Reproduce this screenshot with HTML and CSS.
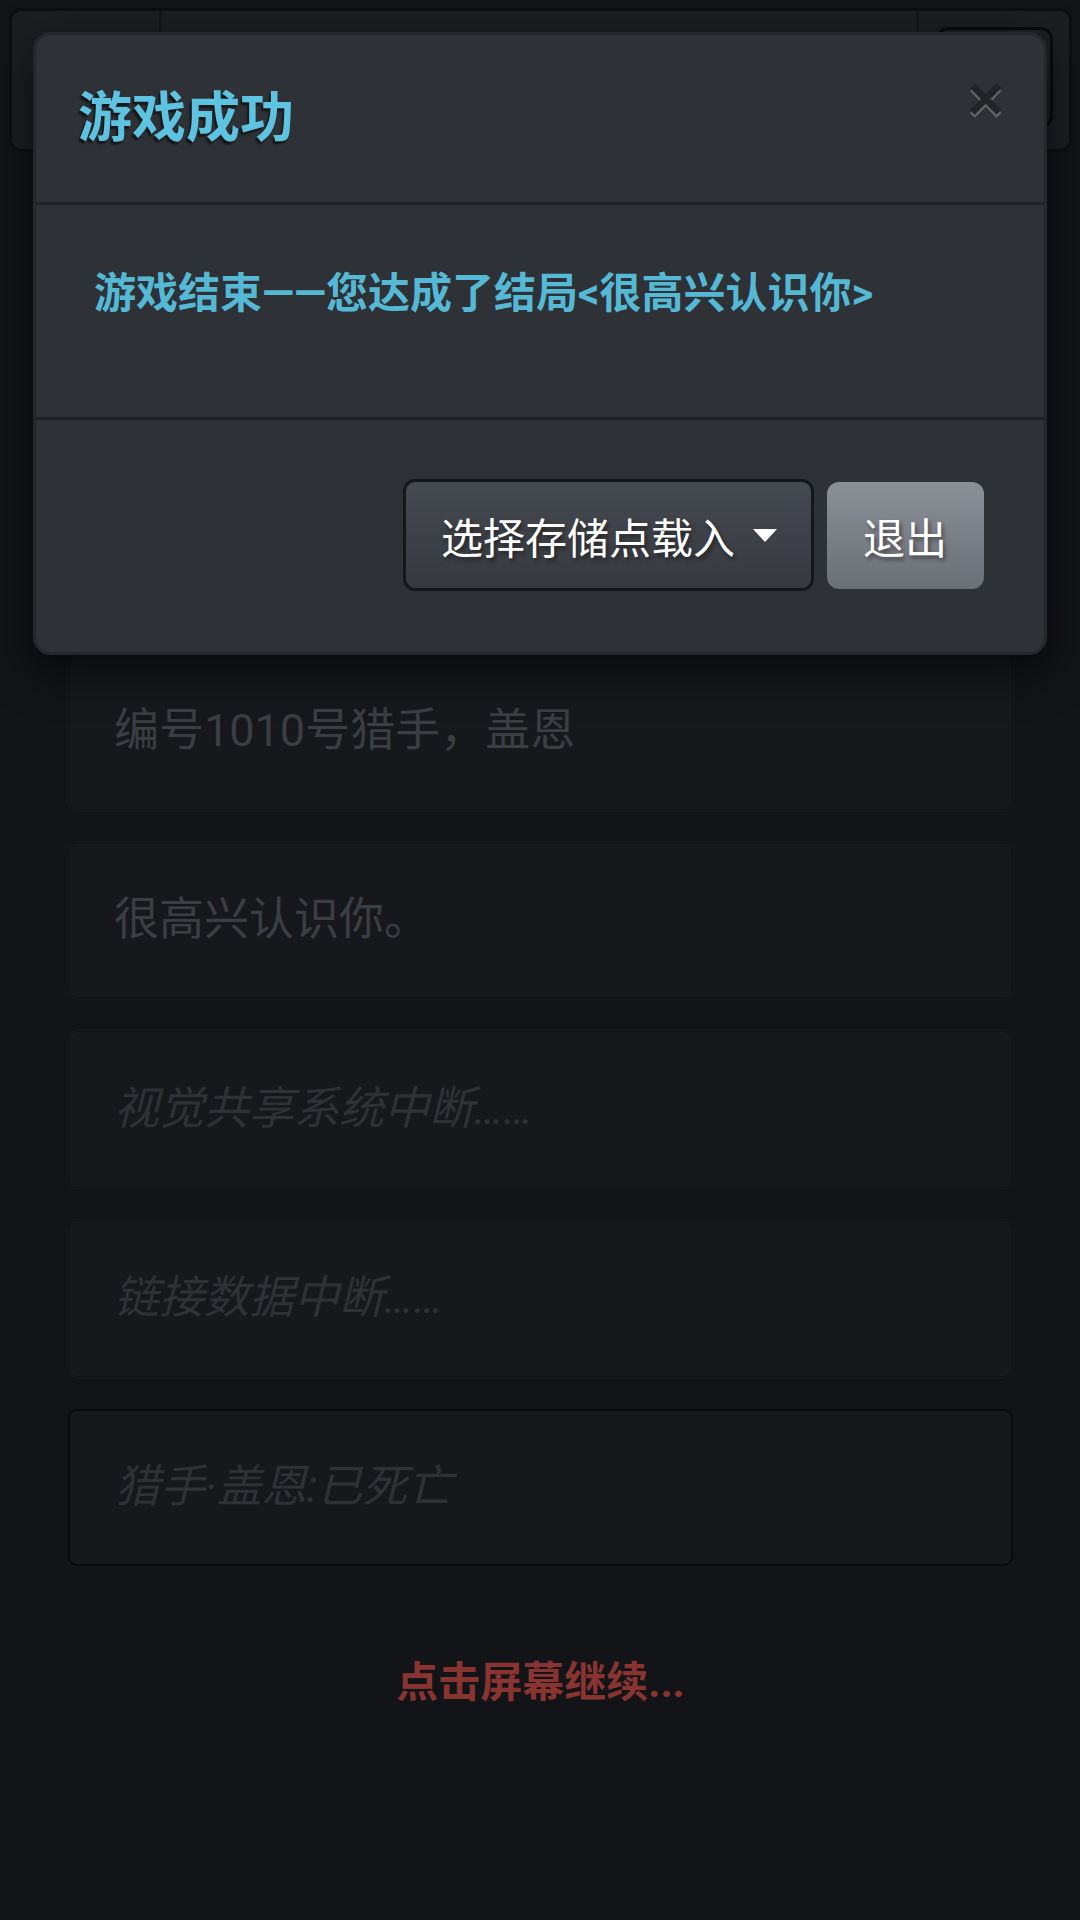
FILE: index.html
```html
<!DOCTYPE html>
<html lang="zh-CN">
<head>
  <meta charset="UTF-8" />
  <meta name="viewport" content="width=device-width, initial-scale=1.0"/>
  <title>游戏成功</title>
  <link rel="stylesheet" href="styles.css">
</head>
<body>
  <nav class="topbar">
    <div class="topbar-left"></div>
    <div class="topbar-mid"></div>
    <div class="topbar-right">
      <div class="menu-btn"></div>
    </div>
  </nav>

  <section class="story">
    <div class="line">编号1010号猎手，盖恩</div>
    <div class="line">很高兴认识你。</div>
    <div class="line sys">视觉共享系统中断……</div>
    <div class="line sys">链接数据中断……</div>
    <div class="line sys last">猎手·盖恩:已死亡</div>
    <p class="continue">点击屏幕继续...</p>
  </section>

  <div class="modal">
    <div class="modal-header">
      <h4 class="modal-title">游戏成功</h4>
      <span class="close">&times;</span>
    </div>
    <div class="modal-body">
      <p>游戏结束——您达成了结局&lt;很高兴认识你&gt;</p>
    </div>
    <div class="modal-footer">
      <button class="btn btn-load">选择存储点载入 <span class="caret"></span></button>
      <button class="btn btn-exit">退出</button>
    </div>
  </div>
</body>
</html>
```

FILE: styles.css
```css
body {
  margin: 0;
  background: #131418;
  font-family: "Roboto", "Noto Sans CJK SC", sans-serif;
  font-size: 42px;
  line-height: 60px;
  color: #3b3e43;
}
.topbar {
  display: flex;
  margin: 8px 8px 0 9px;
  height: 138px;
  background: #1c1e22;
  border: 3px solid #0e0f12;
  border-radius: 12px;
}
.topbar-left {
  width: 147px;
  border-right: 3px solid #15171a;
}
.topbar-mid {
  flex: 1;
  border-right: 3px solid #15171a;
}
.topbar-right {
  width: 150px;
  display: flex;
  align-items: flex-start;
  justify-content: center;
  padding-top: 16px;
}
.menu-btn {
  width: 111px;
  height: 95px;
  background: #1d1f23;
  border: 3px solid #0b0c0e;
  border-radius: 12px;
}
.story {
  padding: 501px 67px 0 68px;
}
.line {
  height: 64px;
  padding: 45px 45px 46px;
  margin-bottom: 32px;
  font-size: 45px;
  line-height: 64px;
  background: #17181c;
  border: 1px solid #0f1013;
  border-radius: 9px;
  box-shadow: 0 0 0 1px #1a1b1f;
}
.line.sys {
  font-style: italic;
  color: #2f3135;
}
.line.last {
  border: 2px solid #0a0b0d;
  padding: 44px 45px 45px;
  box-shadow: none;
}
.continue {
  margin: 87px 0 0;
  text-align: center;
  font-weight: bold;
  color: #8a3431;
}
.modal {
  position: absolute;
  top: 32px;
  left: 33px;
  width: 1008px;
  background: #2e3136;
  border: 3px solid #25272b;
  border-radius: 18px;
  box-shadow: 0 15px 45px rgba(0,0,0,0.6);
}
.modal-header {
  display: flex;
  justify-content: space-between;
  align-items: flex-start;
  padding: 45px 45px 45px 42px;
  border-bottom: 3px solid #1f2226;
}
.modal-title {
  margin: 0;
  font-size: 54px;
  line-height: 77px;
  font-weight: bold;
  color: #5ec3e0;
  text-shadow: -2px 3px 2px rgba(0,0,0,0.55);
}
.close {
  font-size: 63px;
  line-height: 63px;
  font-weight: bold;
  font-family: "Liberation Sans", sans-serif;
  color: #000;
  opacity: 0.25;
  text-shadow: 0 3px 0 #fff;
  margin-right: -5px;
  margin-top: -13px;
}
.modal-body {
  padding: 59px 45px 93px 58px;
  border-bottom: 3px solid #1f2226;
}
.modal-body p {
  margin: 0;
  font-weight: bold;
  color: #55b8d5;
}
.modal-footer {
  display: flex;
  justify-content: flex-end;
  align-items: center;
  gap: 13px;
  padding: 59px 60px 61px;
}
.btn {
  font-family: inherit;
  font-size: 42px;
  color: #fff;
  text-shadow: 2px 3px 4px rgba(0,0,0,0.45);
  border-radius: 12px;
  cursor: pointer;
}
.btn-load {
  display: flex;
  align-items: center;
  height: 112px;
  padding: 0 34px 0 35px;
  background: linear-gradient(#464a51, #36393e);
  border: 3px solid #15171a;
}
.caret {
  display: inline-block;
  margin-left: 18px;
  border-top: 13px solid #fff;
  border-left: 12px solid transparent;
  border-right: 12px solid transparent;
}
.btn-exit {
  height: 107px;
  padding: 0 37px 0 36px;
  background: linear-gradient(#8b8f96, #6b7077);
  border: 0;
}
```
